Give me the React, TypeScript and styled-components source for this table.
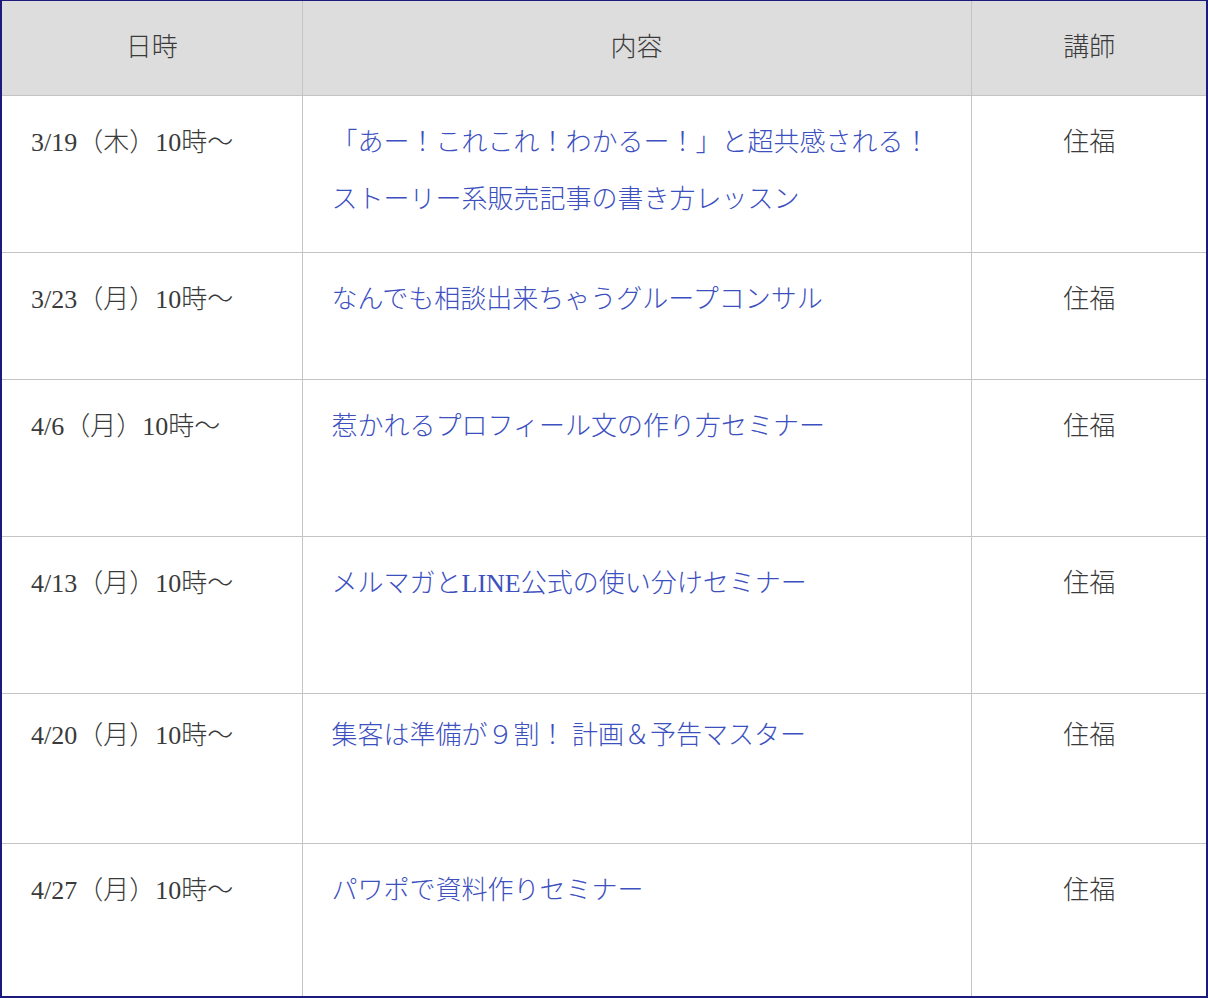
import React, {FC} from 'react';
import styled, {createGlobalStyle} from 'styled-components';

const GlobalStyle = createGlobalStyle`
    html, body {
        margin: 0;
        padding: 0;
        background: #ffffff;
    }
`;

type Lesson = {
    date: string;
    title: string[];
    teacher: string;
    height: number;
    offset?: number;
};

const lessons: Lesson[] = [
    {date: '3/19（木）10時〜', title: ['「あー！これこれ！わかるー！」と超共感される！', 'ストーリー系販売記事の書き方レッスン'], teacher: '住福', height: 157},
    {date: '3/23（月）10時〜', title: ['なんでも相談出来ちゃうグループコンサル'], teacher: '住福', height: 127},
    {date: '4/6（月）10時〜', title: ['惹かれるプロフィール文の作り方セミナー'], teacher: '住福', height: 157},
    {date: '4/13（月）10時〜', title: ['メルマガとLINE公式の使い分けセミナー'], teacher: '住福', height: 157},
    {date: '4/20（月）10時〜', title: ['集客は準備が９割！ 計画＆予告マスター'], teacher: '住福', height: 150, offset: 13},
    {date: '4/27（月）10時〜', title: ['パワポで資料作りセミナー'], teacher: '住福', height: 152},
];

const App: FC = () => {
    return (
        <>
            <GlobalStyle/>
            <Frame>
                <Schedule>
                    <colgroup>
                        <col style={{width: 300}}/>
                        <col style={{width: 669}}/>
                        <col style={{width: 236}}/>
                    </colgroup>
                    <thead>
                    <tr>
                        <HeadCell>日時</HeadCell>
                        <HeadCell>内容</HeadCell>
                        <HeadCell>講師</HeadCell>
                    </tr>
                    </thead>
                    <tbody>
                    {lessons.map((l) => (
                        <Row key={l.date} $height={l.height}>
                            <Cell $offset={l.offset}>{l.date}</Cell>
                            <Cell $offset={l.offset}>
                                {l.title.map((t) => <Title key={t}>{t}</Title>)}
                            </Cell>
                            <Cell $offset={l.offset} $center>{l.teacher}</Cell>
                        </Row>
                    ))}
                    </tbody>
                </Schedule>
            </Frame>
        </>
    );
};

export default App;

const Frame = styled.div({
    boxSizing: 'border-box',
    width: 1208,
    height: 998,
    borderTop: '1px solid #1c1a7c',
    borderRight: '2px solid #1c1a7c',
    borderBottom: '2px solid #1c1a7c',
    borderLeft: '2px solid #1c1a7c',
    overflow: 'hidden',
    background: '#ffffff',
});

const Schedule = styled.table({
    width: 1205,
    tableLayout: 'fixed',
    borderCollapse: 'collapse',
    borderStyle: 'hidden',
    fontFamily: '"Liberation Serif", "Noto Sans CJK JP", serif',
    fontSize: 26,
    fontWeight: 300,
    color: '#3a3a3a',
});

const HeadCell = styled.th({
    height: 94,
    padding: 0,
    background: '#dddddd',
    border: '1px solid #c4c4c4',
    fontWeight: 300,
    textAlign: 'center',
    verticalAlign: 'middle',
    lineHeight: '30px',
});

const Row = styled.tr<{ $height: number }>`
    height: ${(p) => p.$height}px;
`;

const Cell = styled.td<{ $offset?: number; $center?: boolean }>`
    box-sizing: border-box;
    border: 1px solid #c4c4c4;
    vertical-align: top;
    padding: ${(p) => p.$offset ?? 18}px 0 0 ${(p) => (p.$center ? 0 : 29)}px;
    text-align: ${(p) => (p.$center ? 'center' : 'left')};
    line-height: 57px;
    white-space: nowrap;
`;

const Title = styled.div({
    color: '#3d50c0',
});
